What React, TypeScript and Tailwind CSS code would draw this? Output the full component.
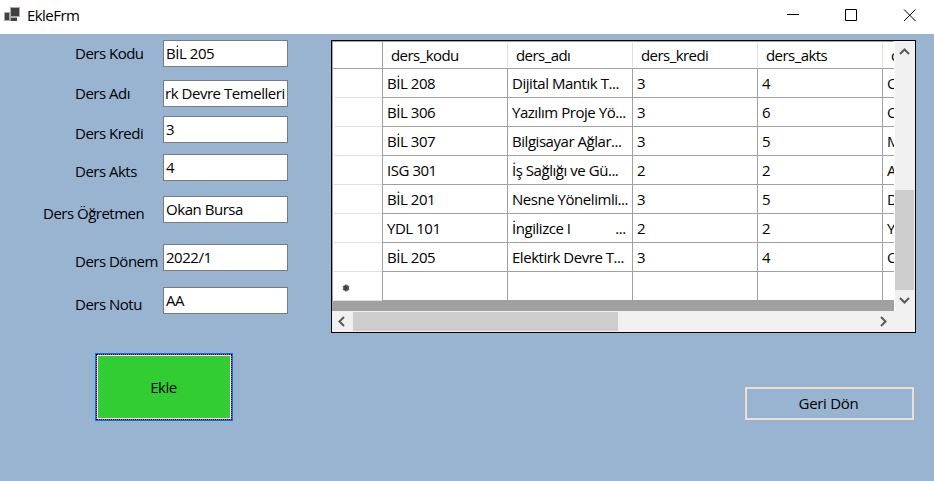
import React from "react";

type Field = { label: string; value: string; box: string; shift: string; labelPos: string; valuePos?: string };

const fields: Field[] = [
  { label: "Ders Kodu", value: "BİL 205", box: "mt-[6px]", shift: "pt-0", labelPos: "pl-[75px]" },
  { label: "Ders Adı", value: "rk Devre Temelleri", box: "mt-[13px]", shift: "pt-0", labelPos: "pl-[75px]", valuePos: "-ml-px" },
  { label: "Ders Kredi", value: "3", box: "mt-[9px]", shift: "pt-1", labelPos: "pl-[75px]" },
  { label: "Ders Akts", value: "4", box: "mt-[11px]", shift: "pt-1", labelPos: "pl-[75px]" },
  { label: "Ders Öğretmen", value: "Okan Bursa", box: "mt-[15px]", shift: "pt-1", labelPos: "pl-[43px]" },
  { label: "Ders Dönem", value: "2022/1", box: "mt-[21px]", shift: "pt-1", labelPos: "pl-[75px]" },
  { label: "Ders Notu", value: "AA", box: "mt-[16px]", shift: "pt-1", labelPos: "pl-[75px]" },
];

const rows: string[][] = [
  ["BİL 208", "Dijital Mantık T...", "3", "4", "O"],
  ["BİL 306", "Yazılım Proje Yö...", "3", "6", "O"],
  ["BİL 307", "Bilgisayar Ağlar...", "3", "5", "M"],
  ["ISG 301", "İş Sağlığı ve Gü...", "2", "2", "A"],
  ["BİL 201", "Nesne Yönelimli...", "3", "5", "D"],
  ["YDL 101", "İngilizce I             ...", "2", "2", "Y"],
  ["BİL 205", "Elektirk Devre T...", "3", "4", "O"],
  ["", "", "", "", ""],
];

const headers = ["ders_kodu", "ders_adı", "ders_kredi", "ders_akts", "d"];

function Chevron({ d, className }: { d: string; className: string }) {
  return (
    <svg width="11" height="11" viewBox="0 0 11 11" fill="none" stroke="#5a5a5a" strokeWidth="2" className={className}>
      <path d={d} />
    </svg>
  );
}

function TitleBar() {
  return (
    <header className="flex h-[34px] shrink-0 items-start bg-white">
      <svg width="18" height="18" viewBox="0 0 18 18" className="ml-[3px] mt-[5px]" shapeRendering="crispEdges">
        <rect x="7" y="2" width="10" height="10" fill="#aaa" />
        <rect x="1" y="7" width="6" height="9" fill="#aaa" />
        <rect x="7" y="12" width="7" height="4" fill="#aaa" />
        <rect x="8" y="3" width="8" height="8" fill="#404040" />
        <rect x="2" y="8" width="4" height="7" fill="#404040" />
        <rect x="8" y="13" width="6" height="3" fill="#404040" />
      </svg>
      <h1 className="ml-[6px] mt-[5px] flex-1 leading-5 tracking-[-0.55px]">EkleFrm</h1>
      <svg width="132" height="13" viewBox="0 0 132 13" className="mr-[17px] mt-[9px]" fill="none" stroke="#000">
        <path d="M2 5.5h12" />
        <path d="M60.5 .5h11v11h-11z" />
        <path d="M119 .5l11.500 11.500M130.500 .5l-11.500 11.500" />
      </svg>
    </header>
  );
}

function DataGrid() {
  return (
    <section className="flex h-[293px] w-[585px] flex-col border border-black bg-[#f0f0f0]">
      <div className="flex h-[270px]">
        <div className="w-[562px] overflow-hidden border-l border-t border-[#a0a0a0] bg-[#a0a0a0]">
          <div className="flex h-[27px] w-[700px] border-b border-[#a0a0a0] bg-white">
            <div className="w-[50px] shrink-0 border-r border-[#a0a0a0]" />
            {headers.map((h) => (
              <div key={h} className="flex w-[125px] shrink-0">
                <span className="flex-1 pl-[8px] pt-[3px] leading-5 tracking-[-0.56px]">{h}</span>
                <i className="mt-px h-[24px] w-px bg-[#e0e0e0]" />
              </div>
            ))}
          </div>
          {rows.map((r, i) => (
            <div key={i} className="flex h-[29px] w-[700px] bg-white">
              <div className="w-[50px] shrink-0 border-r border-[#a0a0a0] pl-px">
                <div className="flex h-[29px] items-center border-b border-[#e0e0e0] pl-[8px]">
                  {i === 7 && (
                    <svg width="8" height="8" viewBox="0 0 8 8" className="mt-[3px]">
                      <path d="M4 0v8M.5 2l7 4M7.500 2l-7 4" stroke="#999" strokeWidth="1.2" />
                      <circle cx="4" cy="4" r="2.900" fill="#454545" />
                    </svg>
                  )}
                </div>
              </div>
              {r.map((c, j) => (
                <div
                  key={j}
                  className="w-[125px] shrink-0 whitespace-pre border-b border-r border-[#a0a0a0] pl-[4px] pt-[4px] leading-5 tracking-[-0.46px]"
                >
                  {c}
                </div>
              ))}
            </div>
          ))}
        </div>
        <div className="flex w-[20px] flex-col items-center border-l border-white">
          <Chevron d="M1 8l4.500-4.500 4.500 4.500" className="mt-[5px]" />
          <div className="mt-[133px] h-[100px] w-[19px] bg-[#cdcdcd]" />
          <Chevron d="M1 3l4.500 4.500 4.500-4.500" className="mt-[5px]" />
        </div>
      </div>
      <div className="flex h-[21px] items-center">
        <Chevron d="M8 1L3.500 5.500 8 10" className="ml-[4px]" />
        <div className="ml-[6px] h-[19px] w-[265px] bg-[#cdcdcd]" />
        <Chevron d="M3 1l4.500 4.500L3 10" className="ml-[260px]" />
      </div>
    </section>
  );
}

export default function App() {
  return (
    <div className="flex h-[481px] w-[934px] flex-col overflow-hidden bg-[#99b4d1] font-['Open_Sans','Noto_Sans',sans-serif] text-[15px] text-black">
      <TitleBar />
      <main className="flex flex-1">
        <form className="w-[331px]">
          {fields.map((f) => (
            <div key={f.label} className={`flex h-[27px] ${f.box}`}>
              <label className={`w-[163px] shrink-0 whitespace-nowrap ${f.labelPos} ${f.shift}`}>
                <span className="block pt-[3px] leading-5 tracking-[-0.5px]">{f.label}</span>
              </label>
              <div className="w-[125px] overflow-hidden whitespace-nowrap border border-[#7a7a7a] bg-white pl-[2px] pt-[2px] leading-5">
                <span className={`tracking-[-0.46px] ${f.valuePos ?? ""}`}>{f.value}</span>
              </div>
            </div>
          ))}
          <button type="button" className="ml-[95px] mt-[39px] block h-[68px] w-[138px] border border-[#0078d7] bg-[#ff30d0]">
            <span className="flex h-full w-full border border-dotted border-black">
              <span className="flex flex-1 items-center justify-center border border-[#e8e8e8] bg-[#32cd32] pr-px leading-5 tracking-[-0.5px]">Ekle</span>
            </span>
          </button>
        </form>
        <div className="flex flex-col pt-[6px]">
          <DataGrid />
          <button type="button" className="ml-[413px] mt-[53px] flex h-[35px] w-[171px] items-center justify-center border border-[#adadad]">
            <span className="flex h-full w-full items-center justify-center border-2 border-[#e3e3e3] pb-[2px] pr-[2px] leading-5 tracking-[-0.3px]">Geri Dön</span>
          </button>
        </div>
      </main>
    </div>
  );
}
